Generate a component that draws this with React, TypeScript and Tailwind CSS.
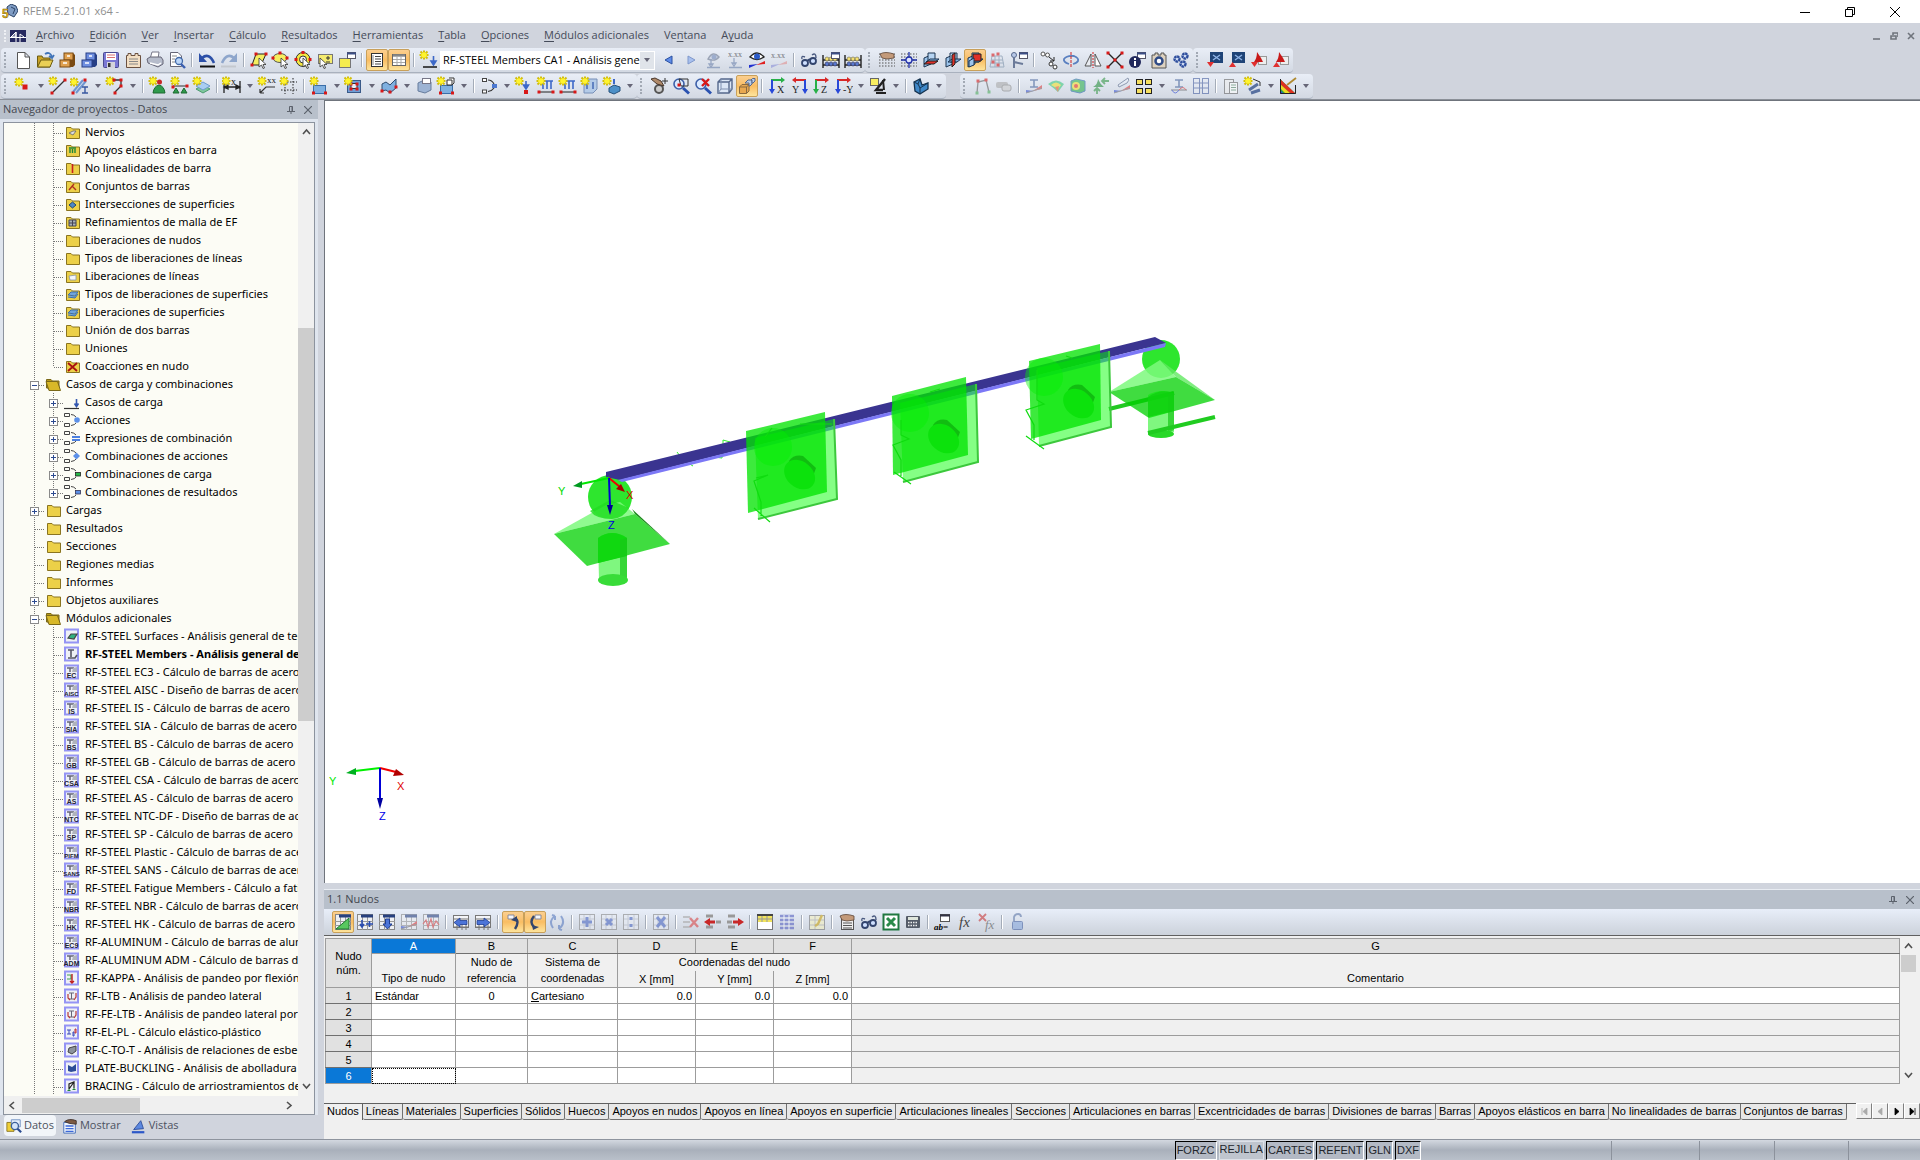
import type { ReactNode } from "react";

type PProps = { d: string; f?: string; s?: string; w?: number; o?: number };

function P({ d, f = "none", s = "none", w = 1, o = 1 }: PProps) {
  return <path d={d} fill={f} stroke={s} strokeWidth={w} opacity={o} />;
}

function Star({ x = 5, y = 5 }: { x?: number; y?: number }) {
  return (
    <g transform={`translate(${x} ${y})`}>
      <P d="M-4.500 0H4.500M0-4.500V4.500M-3.500-3.500L3.500 3.500M3.500-3.500L-3.500 3.500" s="#d2be10" w={2} />
      <circle r="2.800" fill="#fff42e" />
    </g>
  );
}

function Dots({ at, c = "#d81818" }: { at: number[][]; c?: string }) {
  return (
    <>
      {at.map(([x, y]) => (
        <rect key={`${x}-${y}`} x={x - 1.5} y={y - 1.5} width="3" height="3" fill={c} />
      ))}
    </>
  );
}

function Label({ x, y, t, c = "#222", size = 9 }: { x: number; y: number; t: string; c?: string; size?: number }) {
  return (
    <text x={x} y={y} fill={c} fontSize={size} fontFamily="Liberation Serif, serif">
      {t}
    </text>
  );
}

const cursor = <P d="M10 8V17L12.500 15L14 18.500L15.500 18L14 14.500H17Z" f="#fff" s="#333" w={0.8} />;
const miniWindow = (
  <>
    <rect x="10.500" y="2.500" width="8" height="6" fill="#fff" stroke="#556" />
    <P d="M10 3.500H19" s="#3c4f86" w={2} />
  </>
);
const gridDots = <path d="M2 4H18M2 7H18M2 10H18M2 13H18M2 16H18" stroke="#555" strokeWidth="1.200" strokeDasharray="1.500 1.500" />;
const sheet = (
  <>
    <rect x="2.500" y="2.500" width="15" height="15" fill="#eef0f4" stroke="#888" />
    <P d="M2 9.500H18M2 13.500H18M7.500 5V18M12.500 5V18" s="#999" />
    <P d="M6 4H18" s="#27407f" w={3} />
  </>
);
const lens = (
  <>
    <circle cx="8" cy="8" r="5" fill="#dbeaff" stroke="#3c5fa8" strokeWidth="1.600" />
    <P d="M12 12L18 17.500" s="#2a52b0" w={3} />
  </>
);
const surface = (
  <>
    <rect x="4.500" y="9.500" width="12" height="8" fill="#7fb0e0" stroke="#3a6ea8" />
    <Dots at={[[4.5, 17], [16.5, 17]]} />
  </>
);
const planes = (
  <>
    <P d="M3 8L10 5V14L3 17Z" f="#9cc4ec" s="#1c3450" />
    <P d="M7 3H14V12H7Z" f="#b6d4f2" s="#1c3450" />
    <P d="M5 12L9 9H18L14 12Z" f="#7fb0e0" s="#1c3450" />
  </>
);
const trace = (
  <>
    <rect x="3.500" y="2.500" width="4" height="3" fill="#fff" stroke="#444" />
    <rect x="3.500" y="14" width="4" height="3" fill="#fff" stroke="#444" />
    <P d="M9 4Q13 4 15 8M9 15.500Q13 15 15 12" s="#333" w={1.2} />
  </>
);
const beads = (
  <>
    <P d="M2 5V18M18 5V18M2 10H18M2 15H18" s="#222" w={1.4} />
    {[5, 9, 13].map((x) => (
      <g key={x}>
        <circle cx={x + 1} cy="9" r="2" fill="#f5e070" stroke="#665" strokeWidth=".6" />
        <circle cx={x + 1} cy="14" r="2" fill="#5878d0" stroke="#335" strokeWidth=".6" />
      </g>
    ))}
  </>
);
const glasses = (
  <>
    <P d="M3 9Q2 5 6 7M13 5Q17 2 17 8" s="#4a5a80" w={1.4} />
    <circle cx="6" cy="13" r="3" fill="#cfe0ff" stroke="#33456e" strokeWidth="1.800" />
    <circle cx="14" cy="11" r="3" fill="#cfe0ff" stroke="#33456e" strokeWidth="1.800" />
    <P d="M8 11L11 9" s="#33456e" w={2} />
  </>
);
const hand = <P d="M3 4Q8 1 17 4V8L10 9L5 8Z" f="#c39a7a" s="#5a4334" w={0.8} />;
const ibeam = <P d="M6 4H14M10 4V11M6 11H14" s="#46649c" w={1.6} />;
const diagram = (
  <>
    <P d="M2 17V14L10 15Z" f="#3a55d0" />
    <P d="M18 9V13L9 15Z" f="#e04040" />
    <P d="M2 17L18 12" s="#777" />
  </>
);

function axes(label: string, left: boolean, c1: string, c2: string) {
  const top = left ? "M17 4H5" : "M4 4H16";
  const head = left ? "M7 1L3 4L7 7Z" : "M14 1L18 4L14 7Z";
  const x = left ? 16 : 5;
  return (
    <>
      <P d={top} s={c1} w={2} />
      <P d={head} f={c1} />
      <P d={`M${x} 4V14`} s={c2} w={2} />
      <P d={`M${x - 3} 13H${x + 3}L${x} 18Z`} f={c2} />
      <Label x={left ? 3 : 10} y={17} t={label} size={10} />
    </>
  );
}

function cabinet(c: string, dark: string) {
  return (
    <>
      <P d="M8 3H16L18 5V15L16 17H8Z" f={dark} />
      <rect x="7" y="3" width="9" height="7" fill={c} stroke={dark} />
      <rect x="3" y="10" width="10" height="7" fill={c} stroke={dark} />
      <P d="M6 13H10M10 6H13" s="#fff" w={1.6} />
    </>
  );
}

function crossTable(sign: string) {
  return (
    <>
      <rect x="2.500" y="2.500" width="15" height="15" fill="#e7ebf3" stroke="#888" />
      <P d="M3 7H17M3 13H17M7 3V17M13 3V17" s="#b5bac6" />
      <P d={sign} s="#4a66c0" w={3} />
    </>
  );
}

const icons: Record<string, ReactNode> = {
  nuevo: <P d="M4.500 2.500H12L16.500 7V18.500H4.500ZM12 2.500V7H16.500" f="#fff" s="#555" />,
  abrir: (
    <>
      <P d="M2.500 17V6H7L8 8H15V17Z" f="#c9a227" s="#6b5b12" />
      <P d="M2.500 17L6 10H18L15 17Z" f="#e9cf55" s="#6b5b12" />
      <P d="M10 4Q15 1 17 7M14 6L17 8L19 5" s="#3f73b8" w={1.8} />
    </>
  ),
  archivador: cabinet("#dfa050", "#7a4a12"),
  archivadorAzul: cabinet("#6f8fe0", "#263f86"),
  guardar: (
    <>
      <rect x="2.500" y="2.500" width="15" height="15" rx="1" fill="#7a78d4" stroke="#4a4a90" />
      <rect x="5" y="3" width="10" height="7" fill="#fff" />
      <P d="M6 5H14M6 7.500H14" s="#d87070" />
      <rect x="6" y="12" width="8" height="6" fill="#d4d4dc" />
      <rect x="7" y="13" width="2.500" height="4" fill="#333" />
    </>
  ),
  informe: (
    <>
      <P d="M3.500 5.500H5V3.500H8V5.500H12V3.500H15V5.500H17.500V17.500H3.500Z" f="#f3dfc4" s="#6b5140" />
      <P d="M6 9H15M6 11.500H15M6 14H15" s="#888" />
    </>
  ),
  imprimir: (
    <>
      <P d="M5 9L7 2H14L13 9Z" f="#fff" s="#778" />
      <P d="M2 9L5 7H16L18 10V14L13 17L3 13Z" f="#b6bccb" s="#667" />
      <P d="M5 13L13 15L16 13" s="#fff" w={1.4} />
    </>
  ),
  vistaPrevia: (
    <>
      <P d="M3.500 2.500H11L14.500 6V16.500H3.500Z" f="#fff" s="#667" />
      <P d="M5 6H10M5 9H8M5 12H8" s="#888" />
      <circle cx="12" cy="11" r="3.500" fill="#bcd7fa" stroke="#4068a8" strokeWidth="1.300" />
      <P d="M14 14L18 18" s="#3a5fb0" w={2.4} />
    </>
  ),
  deshacer: (
    <>
      <P d="M5 8Q12 2 17 13" s="#2c50a8" w={2.6} />
      <P d="M2 3V12H10Z" f="#2c50a8" />
      <P d="M3 16.500H18" s="#111" w={2} />
    </>
  ),
  rehacer: (
    <>
      <P d="M15 8Q8 2 3 13" s="#8ea6cc" w={2.6} />
      <P d="M18 3V12H10Z" f="#8ea6cc" />
      <P d="M2 16.500H17" s="#c4c8ce" w={2} />
    </>
  ),
  selRombo: (
    <>
      <P d="M7 4H17L12 15H3Z" f="#f5ee60" s="#222" />
      {cursor}
      <Dots at={[[7, 4], [17, 4], [3, 15]]} />
    </>
  ),
  selElipse: (
    <>
      <ellipse cx="9" cy="8" rx="7" ry="4.500" fill="#f5ee60" stroke="#555" />
      {cursor}
      <Dots at={[[2, 8], [9, 3], [16, 8]]} />
    </>
  ),
  selAnillo: (
    <>
      <circle cx="10" cy="9.500" r="7" fill="#f5e840" stroke="#333" />
      <circle cx="10" cy="9.500" r="3.500" fill="#f2f4f8" stroke="#333" />
      {cursor}
      <Dots at={[[10, 2.5], [3, 9.5], [17, 9.5]]} />
    </>
  ),
  selMasMenos: (
    <>
      <rect x="3.500" y="4.500" width="14" height="9" fill="#f5ec70" stroke="#777" />
      <P d="M13 6V10M11 8H15M11 12H15" s="#333" />
      <P d="M5 8V17L7.500 15L9 18.500L10.500 18L9 14.500H12Z" f="#fff" s="#333" w={0.8} />
    </>
  ),
  selVentana: (
    <>
      <rect x="2.500" y="8.500" width="11" height="9" fill="#f5ec50" stroke="#777" />
      {miniWindow}
    </>
  ),
  panelLista: (
    <>
      <rect x="4.500" y="3.500" width="11" height="13" fill="#fff" stroke="#333" />
      <P d="M8 6.500H14M8 9H14M8 11.500H14M8 14H14" s="#444" />
      <P d="M6 5V15" s="#888" />
    </>
  ),
  panelTabla: (
    <>
      <rect x="3.500" y="4.500" width="13" height="11" fill="#fff" stroke="#666" />
      <P d="M4 5.500H16" s="#888" w={2.4} />
      <P d="M4 9.500H16M4 12.500H16M8 6V15M12 6V15" s="#aaa" />
    </>
  ),
  nuevaCarga: (
    <>
      <Star />
      <P d="M14.500 6V12M12 11H17L14.500 15Z" f="#3c68c8" s="#3c68c8" w={1.6} />
      <P d="M4 17H18" s="#222" w={1.6} />
    </>
  ),
  anterior: <P d="M13 6V14L6 10Z" f="#5f8ce8" s="#2a50a0" />,
  siguiente: <P d="M7 6V14L14 10Z" f="#a8c0ee" s="#7f98cc" />,
  verCarga: (
    <>
      <P d="M5 9Q10 0 16 7Q12 12 5 9Z" f="#c8d0e0" s="#6c7890" w={1.4} />
      <circle cx="11" cy="7" r="2.500" fill="#7088b8" />
      <P d="M8 9V15M6 14H10L8 17ZM4 17.500H17" s="#6c82ac" w={1.3} />
    </>
  ),
  verValores: (
    <>
      <Label x={3} y={7} t="x.xx" size={8} />
      <P d="M9 8V14M7 13H11L9 16ZM4 17.500H17" s="#6c82ac" w={1.3} />
    </>
  ),
  verResultados: (
    <>
      <P d="M3 7Q10-1 17 7Q10 12 3 7Z" f="#fff" s="#222" w={1.4} />
      <circle cx="10" cy="6.500" r="3" fill="#2a5ac8" />
      <P d="M2 18V15L11 14Z" f="#2030d0" />
      <P d="M18 11V14L9 15Z" f="#e02020" />
    </>
  ),
  valoresResultados: (
    <>
      <Label x={2} y={8} t="x.xx" size={8} />
      <P d="M2 18V15L11 14Z" f="#8a90d8" />
      <P d="M18 11V14L9 15Z" f="#e09090" />
    </>
  ),
  gafas: glasses,
  abacoVentana: (
    <>
      {beads}
      {miniWindow}
    </>
  ),
  abaco: beads,
  rejillaMano: (
    <>
      {gridDots}
      {hand}
    </>
  ),
  rejilla: (
    <>
      {gridDots}
      <circle cx="10" cy="10" r="3" fill="#dfe6ff" stroke="#2030a8" strokeWidth="1.300" />
      <P d="M10 2V7M10 13V18M2 10H7M13 10H18" s="#2030a8" w={1.3} />
    </>
  ),
  planoXY: (
    <>
      {planes}
      <P d="M3 14L7 11H17L13 14Z" f="#e03028" s="#222" />
    </>
  ),
  planoYZ: (
    <>
      {planes}
      <P d="M9 5L12 3V14L9 17Z" f="#e03028" s="#222" />
    </>
  ),
  planoXZ: (
    <>
      {planes}
      <P d="M8 4H16V11H8Z" f="#e03028" s="#222" />
      <P d="M4 11L9 8V15L4 17Z" f="#9cc4ec" s="#1c3450" />
    </>
  ),
  rejillaPlano: (
    <>
      <P d="M5 6L3 17H17L15 6ZM4 10H16M8 6V17M12 6V17M4 13H17" s="#7a90a8" />
      <Dots at={[[6, 5], [11, 4], [6, 12], [11, 15]]} />
    </>
  ),
  sca: (
    <>
      <P d="M5 18V8M5 12L14 14" s="#6b7a99" w={2} />
      <circle cx="5" cy="5" r="2.500" fill="#b8c8e8" stroke="#56688c" />
      {miniWindow}
    </>
  ),
  mover: (
    <>
      <circle cx="4" cy="4" r="2" fill="#fff" stroke="#555" />
      <circle cx="8.500" cy="5" r="2" fill="#fff" stroke="#555" />
      <circle cx="12" cy="14" r="2" fill="#fff" stroke="#333" />
      <circle cx="16" cy="17" r="2" fill="#fff" stroke="#333" />
      <P d="M10 7L15 11M15 7V11H11" s="#222" />
    </>
  ),
  girar: (
    <>
      <P d="M8 14Q2 12 3 9Q6 5 13 6Q18 8 17 11Q16 13 12 14" s="#5a80c0" w={1.8} />
      <path d="M10 2V18" stroke="#d02020" strokeDasharray="3 1" />
    </>
  ),
  simetria: (
    <>
      <P d="M8 4V16H2Z" s="#555" f="#e8ebf0" />
      <P d="M12 4V16H18Z" s="#555" f="#fff" />
      <path d="M10 2V18" stroke="#d02020" strokeDasharray="2 1" />
    </>
  ),
  nodoCruz: (
    <>
      <P d="M3 3L17 17M17 3L3 17" s="#222" w={1.4} />
      <Dots at={[[3, 3], [17, 3], [3, 17], [17, 17], [10, 10]]} />
    </>
  ),
  info: (
    <>
      {miniWindow}
      <circle cx="8" cy="12" r="6" fill="#20285c" />
      <P d="M8 8V10M8 11V16" s="#fff" w={2} />
    </>
  ),
  ajustes: (
    <>
      <P d="M3 5H6V3H9V5H12V3H15V5H17V18H3Z" f="#ddd2c0" s="#555" />
      <circle cx="10" cy="11" r="3.500" fill="#fff" stroke="#2e4a86" strokeWidth="2.500" />
    </>
  ),
  engranajes: (
    <g fill="#cfdcf4" stroke="#2c4c9c" strokeWidth="2.400" strokeDasharray="2.400 .5">
      <circle cx="6" cy="9" r="2.500" />
      <circle cx="14" cy="6" r="2.500" />
      <circle cx="12" cy="14" r="2.500" />
    </g>
  ),
  moduloAbajo: (
    <>
      <rect x="5" y="2" width="13" height="11" fill="#1f4478" />
      <P d="M8 5L15 10M15 5L8 10" s="#8fb4e8" w={1.4} />
      <P d="M2 12H9L5.500 17Z" f="#e03030" />
    </>
  ),
  moduloArriba: (
    <>
      <rect x="5" y="2" width="13" height="11" fill="#1f4478" />
      <P d="M8 5L15 10M15 5L8 10" s="#8fb4e8" w={1.4} />
      <P d="M2 17H9L5.500 12Z" f="#e03030" />
    </>
  ),
  pdfAbajo: (
    <>
      <rect x="9.500" y="6.500" width="8" height="8" fill="#eee" stroke="#999" />
      <P d="M5 12Q8 8 8 2L12 8L14 12Z" f="#c81818" />
      <P d="M2 12H9L5.500 17Z" f="#e03030" />
    </>
  ),
  pdfArriba: (
    <>
      <rect x="9.500" y="6.500" width="8" height="8" fill="#eee" stroke="#999" />
      <P d="M5 12Q8 8 8 2L12 8L14 12Z" f="#c81818" />
      <P d="M2 17H9L5.500 12Z" f="#e03030" />
    </>
  ),
  nudo: (
    <>
      <Star x={6} y={6} />
      <rect x="9.500" y="8.500" width="5" height="5" fill="#d81818" />
    </>
  ),
  linea: (
    <>
      <P d="M5 16L17 4" s="#333" w={1.3} />
      <Star />
      <Dots at={[[4, 17], [17, 4]]} />
    </>
  ),
  barra: (
    <>
      <P d="M3 16L13 4M6 17L16 5" s="#6f96d0" w={2} />
      <Star x={4} y={6} />
      <Dots at={[[3, 17], [15, 4]]} />
      <P d="M12 11H18M15 11V17M12 17H18" s="#3858a0" w={1.4} />
    </>
  ),
  polilinea: (
    <>
      <P d="M6 4H16V10L10 16" s="#333" w={1.3} />
      <Star />
      <Dots at={[[9, 4], [16, 4], [16, 10], [10, 17]]} />
    </>
  ),
  apoyoNudo: (
    <>
      <P d="M5 17Q6 10 11 9Q16 10 17 17Z" f="#2f9a4c" s="#1c6a30" />
      <Star />
      <circle cx="11.500" cy="6" r="2.500" fill="#c82828" />
    </>
  ),
  apoyoLinea: (
    <>
      <P d="M3 10H17" s="#333" />
      <P d="M3 17L6 12L9 17ZM11 17L14 12L17 17Z" f="#2f9a4c" s="#1c6a30" />
      <Star />
      <Dots at={[[3, 11], [17, 10]]} />
    </>
  ),
  apoyoSuperficie: (
    <>
      <P d="M4 13L11 9L18 13L11 17Z" f="#7fc89a" s="#4b9a70" />
      <P d="M4 10L11 6L18 10L11 14Z" f="#a9cdf2" s="#6d9ccc" />
      <Star />
    </>
  ),
  cota: (
    <>
      <P d="M2 5V17M18 5V17M2 11H18M2 11L6 9V13ZM18 11L14 9V13Z" s="#222" w={1.3} f="#222" />
      <Star x={4} y={5} />
      <Label x={9} y={9} t="x" size={10} />
    </>
  ),
  cotaCota: (
    <>
      <P d="M3 17L9 11H18M3 17V13M3 17H7" s="#333" w={1.2} />
      <Star />
      <Label x={10} y={7} t="xx" size={9} />
    </>
  ),
  lineaGuia: (
    <>
      <path d="M2 6H18M2 14H18M6 2V18M14 2V18" stroke="#222" strokeDasharray="1.500 1.500" />
      <Star />
    </>
  ),
  superficie: (
    <>
      {surface}
      <Star />
    </>
  ),
  abertura: (
    <>
      <rect x="3.500" y="4.500" width="13" height="12" fill="#6f9fd8" stroke="#3a5a88" />
      <rect x="7" y="7.500" width="6" height="5" fill="#e8eef8" stroke="#333" />
      <Dots at={[[7, 8], [13, 8], [7, 13], [13, 13]]} />
      <Star x={4} y={5} />
    </>
  ),
  superficieCurva: (
    <>
      <P d="M3 8L7 6L11 9L17 3V12L11 17L7 14L3 15Z" f="#7fb0e0" s="#2f4c70" />
      <Dots at={[[3, 15], [11, 16], [17, 11]]} />
    </>
  ),
  solidoVentana: (
    <>
      <P d="M4 7L10 4L17 6V14L11 17L4 15Z" f="#9db4d4" s="#667c9c" />
      <rect x="8.500" y="2.500" width="8" height="5" fill="#fff" stroke="#778" />
    </>
  ),
  solido: (
    <>
      {surface}
      <P d="M11 4H16V9H11ZM13 2H18V7L16 9" f="#fff" s="#333" />
      <Star />
    </>
  ),
  combinacion: (
    <>
      {trace}
      <rect x="13" y="8" width="5" height="4" fill="#4c78d0" />
    </>
  ),
  cargaNudo: (
    <>
      <Star />
      <P d="M12 5V10M9.500 9H14.500L12 13Z" f="#3c68c8" s="#3c68c8" w={1.6} />
      <rect x="10" y="14" width="4" height="4" fill="#d81818" />
    </>
  ),
  cargaLinea: (
    <>
      <P d="M5 5H17M7 5V13M11 5V13M15 5V13" s="#3c68c8" w={1.6} />
      <P d="M3 16H17" s="#222" />
      <Star />
      <Dots at={[[3, 16], [17, 16]]} />
    </>
  ),
  cargaSuperficie: (
    <>
      <P d="M4 5L8 3H17V13L13 17H4Z" f="#b4cbe8" s="#7890b8" />
      <P d="M7 6V13M13 6V13" s="#4c70b8" w={1.6} />
      <Star />
    </>
  ),
  cargaSolido: (
    <>
      <P d="M7 12L12 9L18 11V15L12 18L7 16Z" f="#4c90c8" s="#27527c" />
      <P d="M12 3V8" s="#3c68c8" w={2} />
      <Star />
    </>
  ),
  manoEngranaje: (
    <>
      <circle cx="10" cy="13" r="4" fill="#ccc" stroke="#555" strokeWidth="2" />
      <P d="M2 3L8 8L15 10L12 5L6 2Z" f="#b08a6a" s="#4a382c" />
      <P d="M16 2V8M13 5H19" s="#333" />
    </>
  ),
  zoomVentana: (
    <>
      {lens}
      <P d="M8 3H17V10H10Z" s="#333" />
      <Dots at={[[8, 9]]} />
    </>
  ),
  zoomQuitar: (
    <>
      {lens}
      <P d="M9 3L16 10M16 3L9 10" s="#d81818" w={2.4} />
    </>
  ),
  cubo: (
    <>
      <P d="M3 6L6 3H17V13L14 17H3ZM3 6H14V17M14 6L17 3" f="#dbe6f6" s="#56688c" w={1.4} />
      <P d="M6 3V13L3 17M6 13H17" s="#7f90b0" />
    </>
  ),
  cubos: (
    <>
      <P d="M2.500 11L5 8.500H12V15L9.500 17.500H2.500ZM2.500 11H9.500V17.500M9.500 11L12 8.500" f="#e8a850" s="#8a6a40" />
      <P d="M8 7L11 4H15V8L13 10H12V7Z" f="#b8cce8" s="#56688c" />
      <P d="M14 4L15.500 2.500H18V5L16 7H15V4Z" f="#b8cce8" s="#56688c" />
    </>
  ),
  vistaX: axes("X", false, "#28b048", "#2848d8"),
  vistaY: axes("Y", true, "#d82828", "#2848d8"),
  vistaZ: axes("Z", false, "#d82828", "#28b048"),
  vistaMenosY: axes("-Y", false, "#d82828", "#2848d8"),
  editar: (
    <>
      <rect x="2.500" y="2.500" width="8" height="7" fill="#f8ee60" stroke="#666" />
      <P d="M17 3L8 14H15" s="#222" w={2.4} />
      <P d="M15 4L16 14M8 17H18" s="#222" w={2} />
    </>
  ),
  volumen: (
    <>
      <P d="M3 6L9 3L11 9L17 7V13L9 18L4 15Z" f="#3f88c8" s="#15324e" w={1.3} />
      <P d="M3 6L7 8L9 3M7 8L9 12L17 7M9 12V18" s="#15324e" />
    </>
  ),
  deformada: (
    <>
      <P d="M5 17L6 6L14 4L17 16" s="#666" w={1.3} />
      <Dots c="#50b060" at={[[5, 17], [17, 16]]} />
      <Dots at={[[6, 5], [14, 4]]} />
    </>
  ),
  seccion: (
    <>
      <rect x="2" y="6" width="12" height="6" rx="2" fill="#aaa" />
      <rect x="8" y="9" width="9" height="6" rx="2" fill="#ccc" stroke="#888" />
    </>
  ),
  esfuerzos: (
    <>
      {ibeam}
      {diagram}
    </>
  ),
  isobandas: (
    <>
      <P d="M2 8Q10 1 18 8L12 16Q9 13 2 8Z" f="#40c880" />
      <P d="M5 9Q10 4 15 9L12 13Z" f="#f0e030" />
      <P d="M9 11L13 10L12 16Z" f="#f06030" />
    </>
  ),
  isoSolido: (
    <>
      <P d="M3 5L8 3L17 5V15L12 17L3 15Z" f="#30b050" s="#2868a8" />
      <circle cx="8" cy="10" r="4" fill="#f0e030" />
      <circle cx="8" cy="10" r="2" fill="#e83020" />
    </>
  ),
  reacciones: (
    <>
      <P d="M3 11Q8 8 8 3Q10 8 14 11Z" f="#2a9040" />
      <P d="M7 18V13M4 15L7 12L10 15M19 5H13M15 2L12 5L15 8" s="#389848" w={1.8} />
    </>
  ),
  tensiones: (
    <>
      <P d="M6 9L16 2Q18 4 15 7L7 11Z" f="#e8eef8" s="#586888" />
      {diagram}
    </>
  ),
  ventanas: (
    <g fill="#f6e060" stroke="#222">
      <rect x="2.500" y="3.500" width="6" height="5" />
      <rect x="11.500" y="3.500" width="6" height="5" />
      <rect x="2.500" y="12.500" width="6" height="5" />
      <rect x="11.500" y="12.500" width="6" height="5" />
    </g>
  ),
  momentos: (
    <>
      {ibeam}
      <P d="M2 14H18" s="#555" />
      <P d="M3 14Q6 20 10 14" s="#3048d0" />
      <P d="M10 14Q14 9 17 14" s="#d83030" />
    </>
  ),
  multiTabla: (
    <g fill="#e6ebf4" stroke="#4860a0">
      <rect x="2.500" y="2.500" width="6" height="15" />
      <rect x="11.500" y="2.500" width="6" height="15" />
      <path d="M2 7H18M2 12H18" />
    </g>
  ),
  listado: (
    <>
      <rect x="3.500" y="3.500" width="9" height="14" fill="#eee" stroke="#666" />
      <rect x="8.500" y="6.500" width="8" height="11" fill="#fff" stroke="#666" />
      <P d="M10 9H15M10 11.500H15M10 14H15" s="#586" />
    </>
  ),
  nuevoCorte: (
    <>
      <P d="M6 14L15 8M8 17L17 14" s="#5870a0" w={3} />
      <P d="M10 3L17 6V10" s="#333" />
      <Star />
    </>
  ),
  escala: (
    <>
      <P d="M2 3V18H18Z" f="#30b040" />
      <P d="M2 3L18 18H13L2 8Z" f="#e03020" />
      <P d="M2 8L13 18H8L2 12Z" f="#f0d820" />
      <P d="M2 14V18H6Z" f="#2848d8" />
      <P d="M2.500 3V17.500H17.500V9" s="#222" />
      <P d="M9 9L18 2" s="#b08a30" w={1.8} />
    </>
  ),
  tEditar: (
    <>
      {sheet}
      <P d="M3 17H16V6Z" f="#58c860" s="#1e7830" />
    </>
  ),
  tInsertar: (
    <>
      {sheet}
      <P d="M7 8V15M5 12L7 15L9 12M11 12H18M14.500 9V15" s="#2a4cb0" w={1.6} />
    </>
  ),
  tAbajo: (
    <>
      {sheet}
      <P d="M8.500 7H12.500V12H15L10.500 17L6 12H8.500Z" f="#4c74d8" s="#1e3c90" />
    </>
  ),
  tDiagrama: (
    <>
      {sheet}
      {diagram}
    </>
  ),
  tOndas: (
    <>
      {sheet}
      <P d="M2 12L5 8L7 15L10 7L12 15L15 9L18 13" s="#d84040" w={1.2} />
    </>
  ),
  tIzquierda: (
    <>
      <rect x="2.500" y="3.500" width="15" height="12" fill="#f4f5f8" stroke="#777" />
      <P d="M3 7H17M3 15H17M6 12V18M11 12V18M15 12V18" s="#777" />
      <P d="M16 8.500V12.500H9V15L3 10.500L9 6V8.500Z" f="#4c74d8" s="#1e3c90" w={0.8} />
    </>
  ),
  tDerecha: (
    <>
      <rect x="2.500" y="3.500" width="15" height="12" fill="#f4f5f8" stroke="#777" />
      <P d="M3 7H17M3 15H17M6 12V18M11 12V18M15 12V18" s="#777" />
      <P d="M4 8.500V12.500H11V15L17 10.500L11 6V8.500Z" f="#4c74d8" s="#1e3c90" w={0.8} />
    </>
  ),
  tSincA: (
    <>
      <P d="M5 3H11V7H5Z" f="#f4f6fa" s="#889" />
      <P d="M12 6Q17 9 12 17" s="#34466e" w={2.4} />
      <P d="M8 8L14 4V10Z" f="#34466e" />
    </>
  ),
  tSincB: (
    <>
      <P d="M10 3H16V7H10Z" f="#f4f6fa" s="#889" />
      <P d="M9 4Q4 10 9 15" s="#34466e" w={2.4} />
      <P d="M7 13L14 15L8 18Z" f="#34466e" />
    </>
  ),
  tRefrescar: <P d="M6 16Q1 9 8 4M14 4Q19 11 12 17M8 4L5 3M12 17L15 18M8 4V8M12 17V13" s="#5a7cc0" w={2} />,
  tMas: crossTable("M10 5V15M5 10H15"),
  tEquis: crossTable("M7 7L13 13M13 7L7 13"),
  tDos: crossTable("M10 5V8M10 12V15"),
  tBorrar: crossTable("M6 5L14 15M14 5L6 15"),
  tFilaBorrar: (
    <>
      <P d="M2 5H9M2 10H9M2 15H9" s="#aaa" w={2} />
      <P d="M9 6L17 15M17 6L9 15" s="#d84848" w={2.4} />
    </>
  ),
  tFilaIzq: (
    <>
      <P d="M3 4H10M3 15H10M13 10H18" s="#999" w={3} />
      <P d="M12 8.500V11.500H7V14L1 10L7 6V8.500Z" f="#c82828" />
    </>
  ),
  tFilaDer: (
    <>
      <P d="M3 4H10M3 15H10M2 10H7" s="#999" w={3} />
      <P d="M8 8.500V11.500H13V14L19 10L13 6V8.500Z" f="#c82828" />
    </>
  ),
  tAmarilla: (
    <>
      <rect x="2.500" y="3.500" width="15" height="14" fill="#fff" stroke="#777" />
      <rect x="3" y="4" width="14" height="6" fill="#f2e45c" />
      <P d="M2 3H18" s="#444" w={2} />
      <P d="M3 7H17M7 4V10M12 4V10" s="#999" />
    </>
  ),
  tAzul: (
    <>
      <P d="M3 4H17M3 8H17M3 12H17M3 16H17" s="#5560c0" w={2.6} />
      <P d="M7 3V18M12 3V18" s="#fff" />
    </>
  ),
  tLapiz: (
    <>
      <rect x="2.500" y="3.500" width="15" height="14" fill="#f3f0c0" stroke="#777" />
      <P d="M3 8H17M3 13H17M8 4V17" s="#aaa" />
      <P d="M8 14L11 12L15 3" s="#c8a010" w={2.4} />
    </>
  ),
  tPropiedades: (
    <>
      <rect x="4.500" y="5.500" width="12" height="12" fill="#eee" stroke="#555" />
      <P d="M6 11H15M6 13.500H15M6 16H15" s="#555" />
      {hand}
    </>
  ),
  excel: (
    <>
      <rect x="2.500" y="2.500" width="15" height="15" fill="#fff" stroke="#207840" strokeWidth="2" />
      <P d="M6 6L14 14M14 6L6 14" s="#2a8a4a" w={3} />
    </>
  ),
  calculadora: (
    <>
      <rect x="3" y="4" width="14" height="12" rx="1" fill="#555c68" />
      <rect x="5" y="5" width="10" height="3" fill="#dfe6dc" />
      <path d="M5 10.500H15M5 13.500H15" stroke="#eee" strokeWidth="1.500" strokeDasharray="1.500 1" />
    </>
  ),
  parametros: (
    <>
      <rect x="7.500" y="2.500" width="9" height="7" fill="#fff" stroke="#555" />
      <P d="M7 3.500H17" s="#334" w={2} />
      <text x="1" y="18" fontSize="9" fontStyle="italic" fontWeight="bold" fontFamily="Liberation Serif, serif">
        ab=
      </text>
    </>
  ),
  fx: (
    <text x="4" y="15" fontSize="15" fill="#444" fontStyle="italic" fontFamily="Liberation Serif, serif">
      fx
    </text>
  ),
  fxBorrar: (
    <>
      <text x="8" y="17" fontSize="13" fill="#555" fontStyle="italic" fontFamily="Liberation Serif, serif">
        fx
      </text>
      <P d="M2 2L9 9M9 2L2 9" s="#c83838" w={1.8} />
    </>
  ),
  candado: (
    <>
      <P d="M7 9V5Q8 2 11 2Q14 2 14 5" s="#5f78a8" w={1.8} />
      <rect x="5.500" y="9.500" width="10" height="8" rx="1" fill="#88a8dc" stroke="#4460a0" />
    </>
  ),
};

// "|" is a separator, ":*" a pressed button, ":v" adds a drop-down arrow, ":~" is disabled
function Tools({ items }: { items: string }) {
  return (
    <>
      {items.split(" ").map((item, i) => {
        if (item === "|") {
          return <span key={i} className="mx-[3px] h-[14px] w-[2px] border-l border-[#a4acb8] bg-white" />;
        }
        const [name, flag] = item.split(":");
        if (flag === "v") {
          return (
            <span key={i} className="flex h-[22px] w-[35px] items-center">
              <button type="button" aria-label={name} className="flex h-[22px] w-[22px] items-center justify-center">
                <svg viewBox="0 0 20 20" className="h-5 w-5">{icons[name]}</svg>
              </button>
              <button type="button" aria-label={`${name} opciones`} className="flex h-[22px] w-[13px] items-center justify-center">
                <svg viewBox="0 0 6 4" className="h-1 w-[6px]">
                  <path d="M0 0H6L3 4Z" fill="#667" />
                </svg>
              </button>
            </span>
          );
        }
        return (
          <button
            key={i}
            type="button"
            aria-label={name}
            aria-pressed={flag === "*"}
            className={
              flag === "*"
                ? "flex h-[22px] w-[22px] items-center justify-center rounded-xs border border-[#c9a05a] bg-linear-to-b from-[#fbcf90] via-[#f9bd62] to-[#fde49c]"
                : "flex h-[22px] w-[22px] items-center justify-center"
            }
          >
            <svg viewBox="0 0 20 20" className={flag === "~" ? "h-5 w-5 opacity-60" : "h-5 w-5 shrink-0"}>
              {icons[name]}
            </svg>
          </button>
        );
      })}
    </>
  );
}

function ToolGroup({ children }: { children: ReactNode }) {
  return (
    <div className="flex h-[25px] items-center rounded-sm border-b border-[#a9b1be] bg-linear-to-b from-[#e9eef7] to-[#d3d9e3] pr-px">
      <span className="mr-[5px] ml-[3px] h-4 w-[3px] border-l-2 border-dotted border-[#a2a9b4]" />
      {children}
    </div>
  );
}

const menus = [
  ["", "A", "rchivo"],
  ["", "E", "dición"],
  ["", "V", "er"],
  ["", "I", "nsertar"],
  ["", "C", "álculo"],
  ["", "R", "esultados"],
  ["", "H", "erramientas"],
  ["", "T", "abla"],
  ["", "O", "pciones"],
  ["", "M", "ódulos adicionales"],
  ["Ve", "n", "tana"],
  ["A", "y", "uda"],
];

function TitleBar() {
  return (
    <header className="flex h-[23px] items-center justify-between bg-white pr-5 pl-[2px]">
      <div className="flex items-center gap-[5px]">
        <svg viewBox="0 0 16 16" className="h-4 w-4">
          <path d="M5 3L9 0L14 2L16 7L12 13L6 10Z" fill="#7f9cc4" stroke="#2c4468" />
          <path d="M9 3L13 5L11 10" fill="none" stroke="#2c4468" />
          <text x="0" y="14" fontSize="12" fontWeight="bold" fill="#e8b818" stroke="#5a4608" strokeWidth=".4" fontFamily="Liberation Sans, sans-serif">
            5
          </text>
        </svg>
        <h1 className="text-[11px] text-[#8f8f8f]">RFEM 5.21.01 x64 -</h1>
      </div>
      <div className="flex gap-[35px]">
        <button type="button" aria-label="Minimizar">
          <svg viewBox="0 0 10 10" className="h-[10px] w-[10px]" stroke="#000" fill="none">
            <path d="M0 5.500H10" />
          </svg>
        </button>
        <button type="button" aria-label="Restaurar">
          <svg viewBox="0 0 10 10" className="h-[10px] w-[10px]" stroke="#000" fill="none">
            <path d="M.5 2.500H7.500V9.500H.5ZM2.500 2.500V.5H9.500V7.500H7.500" />
          </svg>
        </button>
        <button type="button" aria-label="Cerrar">
          <svg viewBox="0 0 10 10" className="h-[10px] w-[10px]" stroke="#000" fill="none">
            <path d="M0 0L10 10M10 0L0 10" />
          </svg>
        </button>
      </div>
    </header>
  );
}

function MenuBar() {
  return (
    <nav className="flex h-[25px] items-center justify-between bg-[#d0d4dd] pr-[5px] pl-1">
      <div className="flex items-center">
        <span className="mr-1 h-3 w-[2px] border-l-2 border-dotted border-[#eef0f4]" />
        <svg viewBox="0 0 16 12" className="mr-[10px] h-3 w-4" stroke="#fff" fill="none">
          <path d="M0 0H16V12H0Z" fill="#26295f" stroke="none" />
          <path d="M0 7.500H16" />
          <path d="M6 2V12M6 2L1 7H6ZM10 4V12M10 4L14 7" fill="#fff" fillOpacity=".4" />
        </svg>
        <div className="flex gap-[15px] text-[11px] text-[#454b59]">
          {menus.map(([pre, key, post]) => (
            <button type="button" key={post}>
              {pre}
              <u className="underline-offset-2">{key}</u>
              {post}
            </button>
          ))}
        </div>
      </div>
      <div className="flex items-center gap-[9px] text-[#6f747c]">
        {[
          ["Minimizar documento", "M0 7H7"],
          ["Restaurar documento", "M1 4H6V7H1ZM3 3V1H8V5"],
          ["Cerrar documento", "M1 1L7 7M7 1L1 7"],
        ].map(([label, d]) => (
          <button type="button" key={label} aria-label={label}>
            <svg viewBox="0 0 8 8" className="h-2 w-2" stroke="currentColor" strokeWidth="1.600" fill="none">
              <path d={d} />
            </svg>
          </button>
        ))}
      </div>
    </nav>
  );
}

function Toolbars() {
  return (
    <div className="flex flex-col gap-px border-b border-[#8b9098] bg-[#d0d4dd] pl-[1px]">
      <div className="flex">
        <ToolGroup>
          <Tools items="nuevo abrir archivador archivadorAzul guardar informe imprimir vistaPrevia | deshacer rehacer | selRombo selElipse selAnillo selMasMenos selVentana | panelLista:* panelTabla:* | nuevaCarga" />
          <label htmlFor="caso" className="sr-only">
            Caso de carga
          </label>
          <div className="mr-[3px] flex h-[19px] w-[215px] items-center bg-white pr-px">
            <select id="caso" className="h-[19px] w-[200px] appearance-none pl-[3px] text-[11px] text-black">
              <option>RF-STEEL Members CA1 - Análisis gene</option>
            </select>
            <span className="flex h-[17px] w-[15px] items-center justify-center bg-[#e0e4ea]">
              <svg viewBox="0 0 6 4" className="h-1 w-[6px]">
                <path d="M0 0H6L3 4Z" fill="#667" />
              </svg>
            </span>
          </div>
          <Tools items="anterior siguiente verCarga:~ verValores:~ verResultados valoresResultados:~ | gafas abacoVentana abaco" />
        </ToolGroup>
        <ToolGroup>
          <Tools items="rejillaMano rejilla planoXY planoYZ planoXZ:* rejillaPlano:~ sca | mover girar simetria nodoCruz info ajustes engranajes" />
        </ToolGroup>
        <ToolGroup>
          <Tools items="moduloAbajo moduloArriba pdfAbajo pdfArriba" />
        </ToolGroup>
      </div>
      <div className="flex">
        <ToolGroup>
          <Tools items="nudo:v linea barra:v polilinea:v | apoyoNudo apoyoLinea apoyoSuperficie | cota:v cotaCota lineaGuia | superficie:v abertura:v superficieCurva:v solidoVentana solido:v | combinacion:v cargaNudo cargaLinea cargaLinea cargaSuperficie cargaSolido:v" />
        </ToolGroup>
        <ToolGroup>
          <Tools items="manoEngranaje zoomVentana zoomQuitar cubo cubos:* | vistaX vistaY vistaZ vistaMenosY:v editar:v | volumen:v" />
        </ToolGroup>
        <span className="w-[14px]" />
        <ToolGroup>
          <Tools items="deformada:~ seccion:~ | esfuerzos:~ isobandas:~ isoSolido:~ reacciones:~ tensiones:~ ventanas:v momentos:~ multiTabla:~ | listado:~ nuevoCorte:v escala:v" />
        </ToolGroup>
      </div>
    </div>
  );
}

function PanelTitle({ title }: { title: string }) {
  return (
    <div className="flex h-[19px] items-center justify-between bg-[#b8c0cb] pr-[6px] pl-[3px]">
      <h2 className="text-[11px] text-[#43474f]">{title}</h2>
      <div className="flex gap-[9px]">
        <button type="button" aria-label={`Fijar ${title}`}>
          <svg viewBox="0 0 8 8" className="h-2 w-2" stroke="#5c626c" fill="none">
            <path d="M2.500 5V.5H5.500V5M5 .5V5M0 5.500H8M4 5V8" />
          </svg>
        </button>
        <button type="button" aria-label={`Cerrar ${title}`}>
          <svg viewBox="0 0 8 8" className="h-2 w-2" stroke="#5c626c" strokeWidth="1.200" fill="none">
            <path d="M0 0L8 8M8 0L0 8" />
          </svg>
        </button>
      </div>
    </div>
  );
}

type Node = { text: string; level: 1 | 2; icon: string; box?: "+" | "-"; last?: boolean; bold?: boolean };

const sub = (text: string, icon = "folder", extra: Partial<Node> = {}): Node => ({ text, level: 2, icon, ...extra });
const top = (text: string, extra: Partial<Node> = {}): Node => ({ text, level: 1, icon: "folder", ...extra });

const tree: Node[] = [
  sub("Nervios", "f-rib"),
  sub("Apoyos elásticos en barra", "f-spring"),
  sub("No linealidades de barra", "f-nonlinear"),
  sub("Conjuntos de barras", "f-set"),
  sub("Intersecciones de superficies", "f-cross"),
  sub("Refinamientos de malla de EF", "f-mesh"),
  sub("Liberaciones de nudos"),
  sub("Tipos de liberaciones de líneas"),
  sub("Liberaciones de líneas", "f-line"),
  sub("Tipos de liberaciones de superficies", "f-surface"),
  sub("Liberaciones de superficies", "f-surface"),
  sub("Unión de dos barras"),
  sub("Uniones"),
  sub("Coacciones en nudo", "f-node", { last: true }),
  top("Casos de carga y combinaciones", { box: "-", icon: "open" }),
  sub("Casos de carga", "load", { box: "+" }),
  sub("Acciones", "c-circle", { box: "+" }),
  sub("Expresiones de combinación", "c-equal", { box: "+" }),
  sub("Combinaciones de acciones", "c-diamond", { box: "+" }),
  sub("Combinaciones de carga", "c-green", { box: "+" }),
  sub("Combinaciones de resultados", "c-blue", { box: "+", last: true }),
  top("Cargas", { box: "+" }),
  top("Resultados"),
  top("Secciones"),
  top("Regiones medias"),
  top("Informes"),
  top("Objetos auxiliares", { box: "+" }),
  top("Módulos adicionales", { box: "-", icon: "open" }),
  sub("RF-STEEL Surfaces - Análisis general de tensiones", "m-surface"),
  sub("RF-STEEL Members - Análisis general de tensiones", "m-beam", { bold: true }),
  sub("RF-STEEL EC3 - Cálculo de barras de acero", "m:EC"),
  sub("RF-STEEL AISC - Diseño de barras de acero", "m:AISC"),
  sub("RF-STEEL IS - Cálculo de barras de acero", "m:IS"),
  sub("RF-STEEL SIA - Cálculo de barras de acero", "m:SIA"),
  sub("RF-STEEL BS - Cálculo de barras de acero", "m:BS"),
  sub("RF-STEEL GB - Cálculo de barras de acero", "m:GB"),
  sub("RF-STEEL CSA - Cálculo de barras de acero", "m:CSA"),
  sub("RF-STEEL AS - Cálculo de barras de acero", "m:AS"),
  sub("RF-STEEL NTC-DF - Diseño de barras de acero", "m:NTC"),
  sub("RF-STEEL SP - Cálculo de barras de acero", "m:SP"),
  sub("RF-STEEL Plastic - Cálculo de barras de acero", "m:PIFM"),
  sub("RF-STEEL SANS - Cálculo de barras de acero", "m:SANS"),
  sub("RF-STEEL Fatigue Members - Cálculo a fatiga", "m:FD"),
  sub("RF-STEEL NBR - Cálculo de barras de acero", "m:NBR"),
  sub("RF-STEEL HK - Cálculo de barras de acero", "m:HK"),
  sub("RF-ALUMINUM - Cálculo de barras de aluminio", "m:EC9"),
  sub("RF-ALUMINUM ADM - Cálculo de barras de aluminio", "m:ADM"),
  sub("RF-KAPPA - Análisis de pandeo por flexión", "m-kappa"),
  sub("RF-LTB - Análisis de pandeo lateral", "m-ltb"),
  sub("RF-FE-LTB - Análisis de pandeo lateral por EF", "m-ltb"),
  sub("RF-EL-PL - Cálculo elástico-plástico", "m-elpl"),
  sub("RF-C-TO-T - Análisis de relaciones de esbeltez", "m-channel"),
  sub("PLATE-BUCKLING - Análisis de abolladura", "m-plate"),
  sub("BRACING - Cálculo de arriostramientos de cubierta", "m-bracing"),
];

const treeMarks: Record<string, ReactNode> = {
  "f-rib": <P d="M5 9L9 7L12 7L9 11Z" f="#ddd" s="#666" w={0.8} />,
  "f-spring": <P d="M5 6H12M6 7V11M8.500 7V11M11 7V11" s="#208838" w={1.4} />,
  "f-nonlinear": <P d="M8.500 4V13" s="#c82020" w={1.6} />,
  "f-set": <P d="M5 12L10 6M8 8L12 12" s="#b03020" w={1.4} />,
  "f-cross": <P d="M5 9L8.500 6L12 9L8.500 12Z" f="#4c88c8" s="#25466c" />,
  "f-mesh": <P d="M5 6H12V12H5ZM5 9H12M8.500 6V12" f="#a8b0b8" s="#445" />,
  "f-line": <P d="M5 8L12 7V12H6Z" f="#f4f6fa" s="#8895a8" w={0.8} />,
  "f-surface": <P d="M4 9L7 6H14L11 10ZM4 11L11 12L14 8" f="#6fa4dc" s="#3d6ea8" />,
  "f-node": <P d="M4 5L13 13M13 5L4 13" s="#a81010" w={1.8} />,
  "c-circle": <circle cx="13" cy="8" r="2.800" fill="#5c90e8" />,
  "c-equal": <P d="M8 7H16M8 10H16" s="#4c80e0" w={2.2} />,
  "c-diamond": <P d="M12.500 4.500L16 8L12.500 11.500L9 8Z" f="#5c90e8" />,
  "c-green": <rect x="11.500" y="6.500" width="5" height="3.500" fill="#28b848" stroke="#222" strokeWidth=".8" />,
  "c-blue": <rect x="11.500" y="6.500" width="5" height="3.500" fill="#5c90e8" stroke="#335" strokeWidth=".8" />,
  "m-surface": <P d="M4 10L7 6H13L10 11Z" f="#30b080" s="#444" w={1.2} />,
  "m-beam": <P d="M4 4H10M7 4V11M4 12H11L13 9" s="#556" w={1.6} />,
  "m-kappa": (
    <>
      <P d="M3 5H7V9H3" s="#40a050" w={1.2} />
      <P d="M8 4V13M6 11L8 13L10 11" s="#c02020" w={1.4} />
    </>
  ),
  "m-ltb": (
    <>
      <P d="M5 5H10M7.500 5V11M5 11H10" s="#667" />
      <P d="M4 6V10L6 12M12 5V9L10 12" s="#b83838" w={1.2} />
    </>
  ),
  "m-elpl": (
    <>
      <P d="M3 6H7M5 6V10M3 10H7" s="#3848b8" />
      <P d="M9 12V8H10V12Z" s="#3848b8" />
      <P d="M11 9V5H12V9Z" s="#c03030" />
    </>
  ),
  "m-channel": <P d="M5 6L12 4V9L8 12L4 10Z" f="#8c939c" s="#444" />,
  "m-plate": <P d="M4 5L8 7L12 4V11L7 12L4 11Z" f="#2c4c98" />,
  "m-bracing": (
    <>
      <P d="M5 11V6L10 4V10M5 11L10 4" s="#222" w={1.2} />
      <P d="M3 13L5 11L7 13ZM8 12L10 10L12 12Z" f="#208838" />
    </>
  ),
};

function TreeIcon({ icon }: { icon: string }) {
  const code = icon.startsWith("m:") ? icon.slice(2) : "";
  return (
    <svg viewBox="0 0 16 16" className="mr-[5px] ml-px h-4 w-4 shrink-0 overflow-visible">
      {(icon === "folder" || icon.startsWith("f-")) && (
        <path d="M2.500 14.500V3.500H7L8.500 5H15.500V14.500Z" fill="#ecd048" stroke="#8a7420" />
      )}
      {icon === "open" && (
        <>
          <path d="M1.500 12V3.500H6L7.500 5H14V13Z" fill="#b89a1c" stroke="#7a6818" />
          <path d="M1 5.500H12.500L15.500 14.500H4Z" fill="#d8b828" stroke="#7a6818" />
        </>
      )}
      {icon === "load" && (
        <>
          <path d="M0 14.500H15" stroke="#333" strokeWidth="1.200" />
          <path d="M12.500 5V12M10.500 9.500L12.500 12.500L14.500 9.500" stroke="#3458b0" strokeWidth="1.600" fill="none" />
        </>
      )}
      {icon.startsWith("c-") && (
        <path d="M.5 1.500H5.500V4.500H.5ZM.5 11.500H5.500V14.500H.5ZM7 2.500Q10 2.500 12 5M7 13.500Q11 13 12 11" stroke="#444" fill="none" />
      )}
      {icon.startsWith("m") && (
        <rect x="1" y="1.500" width="13" height="13" fill="#eef0f6" stroke="#9494f4" strokeWidth="2" />
      )}
      {code && (
        <>
          <path d="M3 4H10M6 4V8" stroke="#667" strokeWidth="1.500" />
          <path d="M9 4L13 3V8H8Z" fill="#b0b4bc" />
          <text x="7.500" y="14" fontSize={code.length > 3 ? 6 : 7} fontWeight="bold" textAnchor="middle" fill="#223" fontFamily="Liberation Sans, sans-serif">
            {code}
          </text>
        </>
      )}
      {treeMarks[icon]}
    </svg>
  );
}

function Guide({ end, branch, box }: { end?: boolean; branch?: boolean; box?: string }) {
  const drawing = (
    <svg viewBox="0 0 19 18" className="block h-[18px] w-[19px]" fill="none">
      <path d={`M9.500 0V${end ? 10 : 18}${branch ? "M10 10.500H19" : ""}`} stroke="#777" strokeDasharray="1 1" />
      {box && (
        <>
          <rect x="5.500" y="6.500" width="8" height="8" fill="#fff" stroke="#8a8a8a" />
          <path d={box === "+" ? "M7 10.500H12M9.500 8V13" : "M7 10.500H12"} stroke="#2c4a90" />
        </>
      )}
    </svg>
  );
  return box ? (
    <button type="button" aria-label={box === "+" ? "Expandir" : "Contraer"} className="shrink-0">
      {drawing}
    </button>
  ) : (
    <span className="shrink-0">{drawing}</span>
  );
}

function Navigator() {
  return (
    <aside className="flex w-[318px] shrink-0 flex-col bg-[#dfe5ee]">
      <PanelTitle title="Navegador de proyectos - Datos" />
      <div className="mx-[3px] mt-[3px] flex flex-1 flex-col border border-[#8c939e] bg-[#f0f0f0]">
        <div className="flex flex-1">
          <ul className="min-w-0 flex-1 overflow-hidden bg-[#fcfcf5] pl-[21px] font-['Noto_Sans','Open_Sans',sans-serif] text-[11px] text-black">
            {tree.map((node) => (
              <li key={node.text} className="flex h-[18px] items-center overflow-hidden whitespace-nowrap">
                <Guide branch={node.level === 1} box={node.level === 1 ? node.box : undefined} />
                {node.level === 2 && <Guide branch end={node.last} box={node.box} />}
                <TreeIcon icon={node.icon} />
                <span className={node.bold ? "font-bold" : ""}>{node.text}</span>
              </li>
            ))}
          </ul>
          <div className="flex w-4 flex-col items-center bg-[#f0f0f0] py-[5px]">
            <Chevron d="M1 6L4.500 2L8 6" />
            <div className="mt-[191px] h-[393px] w-4 bg-[#cdcdcd]" />
            <span className="flex-1" />
            <Chevron d="M1 2L4.500 6L8 2" />
          </div>
        </div>
        <div className="flex h-[18px] items-center bg-[#f0f0f0] pr-5 pl-1">
          <Chevron d="M6 1L2 4.500L6 8" />
          <div className="ml-[5px] h-[15px] w-[118px] bg-[#cdcdcd]" />
          <span className="flex-1" />
          <Chevron d="M2 1L6 4.500L2 8" />
        </div>
      </div>
      <div className="flex h-[24px] items-start gap-[6px] bg-[#d0d4dd] pl-1 text-[11px] text-[#4c5260]">
        <button type="button" className="flex h-[21px] items-center gap-[2px] rounded-sm bg-[#f2f5f9] px-[2px]">
          <svg viewBox="0 0 18 18" className="h-4 w-4">
            <path d="M1 5H9V15H1Z" fill="#f0d038" stroke="#8a7420" />
            <path d="M6 2H16V10H6Z" fill="#e8f0fc" stroke="#6a8cc0" />
            <circle cx="10" cy="9" r="4" fill="#d4e4fa" stroke="#3c5f98" strokeWidth="1.500" />
            <path d="M13 12L17 16" stroke="#2a4a90" strokeWidth="2.500" />
          </svg>
          Datos
        </button>
        <button type="button" className="flex h-[21px] items-center gap-[2px]">
          <svg viewBox="0 0 18 18" className="h-4 w-4">
            <path d="M2 5H15V17H2Z" fill="#eef3fb" stroke="#3c68b8" />
            <path d="M4 9H13M4 12H13M4 15H13" stroke="#3c68d8" strokeWidth="1.500" />
            <path d="M3 4Q8 0 16 3V7L8 6Z" fill="#7c5a44" stroke="#40302a" />
          </svg>
          Mostrar
        </button>
        <button type="button" className="flex h-[21px] items-center gap-[2px] pl-1">
          <svg viewBox="0 0 18 18" className="h-4 w-4">
            <path d="M3 13L11 3L14 12Z" fill="#5c88e0" stroke="#2c4c98" />
            <path d="M1 16H15" stroke="#2c58c8" strokeWidth="2.500" />
          </svg>
          Vistas
        </button>
      </div>
    </aside>
  );
}

function Chevron({ d }: { d: string }) {
  return (
    <svg viewBox="0 0 9 9" className="h-[9px] w-[9px] shrink-0" fill="none" stroke="#505050" strokeWidth="1.600">
      <path d={d} />
    </svg>
  );
}

const plates = [
  {
    back: "746,431 825,412 827,492 748,513",
    front: "755,438 834,419 837,499 758,519",
    edge: "M834 419L837 499L758 519",
    ball: [773, 447],
    rod: [800, 471],
    wire: "M756 478L768 475L754 481L761 502V516M754 508L770 522M765 437L772 428M800 424L832 424",
  },
  {
    back: "892,396 966,377 968,455 893,475",
    front: "900,403 976,384 978,462 903,482",
    edge: "M976 384L978 462L903 482",
    ball: [910, 413],
    rod: [944, 435],
    wire: "M901 420V435L909 439L893 445L901 460V476M894 472L911 484M930 392L940 389",
  },
  {
    back: "1029,361 1100,344 1101,420 1031,439",
    front: "1037,368 1109,351 1111,427 1039,446",
    edge: "M1109 351L1111 427L1039 446",
    ball: [1044, 377],
    rod: [1079, 400],
    wire: "M1037 370V400L1044 404L1026 410L1034 425V440M1026 436L1044 449M1066 356L1072 358",
  },
];

function Viewport() {
  return (
    <section aria-label="Modelo" className="flex min-h-[400px] flex-1 border-t border-l border-[#6f747c] bg-white">
      <svg className="h-0 min-h-full w-full" fontFamily="Liberation Sans, sans-serif" fontSize="11">
        <g transform="translate(-325 -101)">
          <path d="M677 452L680 456M688 463L693 466M714 457L722 458V454M723 444V440L730 442" fill="none" stroke="#30f030" />
          <ellipse cx="610" cy="497" rx="22" ry="22" fill="#2ee62e" />
          <ellipse cx="1161" cy="359" rx="19" ry="19" fill="#2ee62e" />
          <path d="M606 472L1155 337L1166 343L620 480L606 477Z" fill="#3a3490" />
          <path d="M618 480L1166 343L1165 347L622 482Z" fill="#7c78f6" />

          {/* left support */}
          <path d="M554 534L606 505L620 502L635 514Z" fill="#7cf97c" fillOpacity=".85" />
          <path d="M554 534L635 514L670 544L587 566Z" fill="#00d000" fillOpacity=".75" />
          <path d="M632 509L670 544L635 514Z" fill="#1a8a1a" />
          <path d="M590 511Q596 519 612 519Q624 518 629 508L610 500Z" fill="#20dc20" fillOpacity=".8" />
          <path d="M598 538Q612 528 627 538V580H599Z" fill="#00f000" fillOpacity=".5" />
          <path d="M598 538Q612 528 627 538V556L598 563Z" fill="#10d810" />
          <path d="M620 540L627 538V578L620 576Z" fill="#18c818" fillOpacity=".7" />
          <ellipse cx="613" cy="580" rx="15" ry="6" fill="#38dc38" />

          {/* right support */}
          <path d="M1109 392L1160 360L1176 377Z" fill="#7cf97c" fillOpacity=".85" />
          <path d="M1160 360L1176 377L1215 400Z" fill="#60e860" fillOpacity=".8" />
          <path d="M1109 409L1174 393" stroke="#22c822" strokeWidth="4" />
          <path d="M1109 392L1176 377L1215 400L1149 418Z" fill="#00d000" fillOpacity=".75" />
          <path d="M1148 395Q1160 388 1174 393V432Q1160 440 1148 434Z" fill="#00f000" fillOpacity=".5" />
          <path d="M1168 394L1174 393V430L1168 433Z" fill="#18c818" fillOpacity=".7" />
          <path d="M1148 397Q1160 388 1174 393V411L1148 417Z" fill="#10d010" fillOpacity=".8" />
          <ellipse cx="1161" cy="434" rx="13" ry="4" fill="#28d828" />
          <path d="M1148 433L1215 417" stroke="#20cc20" strokeWidth="4" />

          {plates.map((p) => (
            <g key={p.back}>
              <ellipse cx={p.ball[0]} cy={p.ball[1]} rx="19" ry="19" fill="#00f000" fillOpacity=".35" />
              <polygon points={p.front} fill="#00ff00" fillOpacity=".48" />
              <polygon points={p.back} fill="#00e400" fillOpacity=".76" />
              <path d={p.edge} fill="none" stroke="#3cc83c" strokeWidth="2" />
              <ellipse cx={p.ball[0]} cy={p.ball[1]} rx="19" ry="19" fill="#10ff10" fillOpacity=".12" />
              <g transform={`translate(${p.rod[0]} ${p.rod[1]})`}>
                <path d="M-11-10Q-6-17 3-15L16-3L12 8L-12 2Z" fill="#0cae0c" fillOpacity=".75" />
                <ellipse cx="2" cy="3" rx="17" ry="13" transform="rotate(40)" fill="#0ce20c" />
              </g>
              <path d={p.wire} fill="none" stroke="#0fdc0f" strokeWidth="1.200" />
            </g>
          ))}

          {/* member axes */}
          <path d="M609 478L581 484" stroke="#00e800" strokeWidth="2" />
          <path d="M573 486L582 481V488Z" fill="#009a20" />
          <path d="M609 478L620 487" stroke="#f00000" strokeWidth="2" />
          <path d="M625 492L616 489L621 484Z" fill="#a80000" />
          <path d="M609 478L610 506" stroke="#0000d0" strokeWidth="2" />
          <path d="M610 515L607 505H613Z" fill="#000090" />
          <text x="558" y="495" fill="#00d800">Y</text>
          <text x="626" y="499" fill="#e00000">X</text>
          <text x="608" y="529" fill="#0000e0">Z</text>

          {/* global axes */}
          <path d="M380 768L355 771" stroke="#00f000" strokeWidth="2" />
          <path d="M346 773L356 768V775Z" fill="#00b020" />
          <path d="M380 768L396 772" stroke="#f00000" strokeWidth="2" />
          <path d="M404 775L393 776L396 769Z" fill="#b00000" />
          <path d="M380 768V800" stroke="#0000d8" strokeWidth="2" />
          <path d="M380 809L377 798H383Z" fill="#0000a0" />
          <text x="329" y="785" fill="#00e800">Y</text>
          <text x="397" y="790" fill="#e00000">X</text>
          <text x="379" y="820" fill="#0000e8">Z</text>
        </g>
      </svg>
    </section>
  );
}

const letterCell = "border border-[#9c9c9c] border-b-[#707070] bg-[#e1e1e1] font-normal";
const headCell = "border border-[#9c9c9c] bg-[#f0f0f0] pb-px align-bottom font-normal leading-4";
const cell = "border border-[#9c9c9c] bg-white px-[3px] py-0";
const emptyColumns = ["A", "B", "C", "D", "E", "F"];

function NodeTable() {
  return (
    <div className="flex items-start border-t border-[#606060] bg-[#f0f0f0] pt-[2px] pb-[19px] pl-px">
      <table className="min-w-0 flex-1 table-fixed border-collapse font-['Liberation_Sans',sans-serif] text-[11px] leading-[14px] text-black">
        <colgroup>
          <col className="w-[46px]" />
          <col className="w-[84px]" />
          <col className="w-[72px]" />
          <col className="w-[90px]" />
          <col className="w-[78px]" />
          <col className="w-[78px]" />
          <col className="w-[78px]" />
          <col />
        </colgroup>
        <thead>
          <tr className="h-[15px]">
            <th rowSpan={3} className="border border-[#9c9c9c] bg-[#e1e1e1] p-0 leading-[14px] font-normal">
              Nudo
              <br />
              núm.
            </th>
            <th className="border border-[#9c9c9c] bg-[#0a78d7] p-0 font-normal text-white">A</th>
            {["B", "C", "D", "E", "F", "G"].map((letter) => (
              <th key={letter} className={letterCell}>
                {letter}
              </th>
            ))}
          </tr>
          <tr className="h-4">
            <th rowSpan={2} className={headCell}>Tipo de nudo</th>
            <th rowSpan={2} className={headCell}>Nudo de referencia</th>
            <th rowSpan={2} className={headCell}>Sistema de coordenadas</th>
            <th colSpan={3} className="border-x border-[#9c9c9c] bg-[#f0f0f0] font-normal">Coordenadas del nudo</th>
            <th rowSpan={2} className={headCell}>Comentario</th>
          </tr>
          <tr className="h-4">
            {["X [mm]", "Y [mm]", "Z [mm]"].map((label) => (
              <th key={label} className="border-x border-b border-[#9c9c9c] bg-[#f0f0f0] font-normal">
                {label}
              </th>
            ))}
          </tr>
        </thead>
        <tbody>
          <tr className="h-4">
            <th className={letterCell}>1</th>
            <td className={cell}>Estándar</td>
            <td className={`${cell} text-center`}>0</td>
            <td className={cell}>
              <u>C</u>artesiano
            </td>
            <td className={`${cell} text-right`}>0.0</td>
            <td className={`${cell} text-right`}>0.0</td>
            <td className={`${cell} text-right`}>0.0</td>
            <td className={cell} />
          </tr>
          {[2, 3, 4, 5, 6].map((row) => (
            <tr key={row} className="h-4">
              <th className={row === 6 ? "border border-[#9c9c9c] bg-[#0a78d7] font-normal text-white" : letterCell}>
                {row}
              </th>
              {emptyColumns.map((column) => (
                <td
                  key={column}
                  className={
                    row === 6 && column === "A"
                      ? "border border-[#9c9c9c] bg-white outline-1 -outline-offset-1 outline-black outline-dotted"
                      : cell
                  }
                />
              ))}
              <td className="border border-[#9c9c9c] bg-[#f0f0f0]" />
            </tr>
          ))}
        </tbody>
      </table>
      <div className="flex w-[17px] shrink-0 flex-col items-center self-stretch py-1">
        <Chevron d="M1 6L4.500 2L8 6" />
        <div className="mt-1 h-[17px] w-[15px] bg-[#cdcdcd]" />
        <span className="flex-1" />
        <Chevron d="M1 2L4.500 6L8 2" />
      </div>
      <span className="w-[3px]" />
    </div>
  );
}

const sheetTabs = [
  "Líneas",
  "Materiales",
  "Superficies",
  "Sólidos",
  "Huecos",
  "Apoyos en nudos",
  "Apoyos en línea",
  "Apoyos en superficie",
  "Articulaciones lineales",
  "Secciones",
  "Articulaciones en barras",
  "Excentricidades de barras",
  "Divisiones de barras",
  "Barras",
  "Apoyos elásticos en barra",
  "No linealidades de barras",
  "Conjuntos de barras",
];

function SheetTabs() {
  return (
    <div className="flex h-[36px] items-start justify-between bg-[#f0f0f0] font-['Liberation_Sans',sans-serif] text-[11px] text-black">
      <div className="flex min-w-0 flex-1 overflow-hidden border-t border-[#606060]">
        <button type="button" className="-mt-px h-[17px] border-r border-[#606060] bg-[#f0f0f0] px-[3px] whitespace-nowrap">
          Nudos
        </button>
        {sheetTabs.map((tab) => (
          <button
            type="button"
            key={tab}
            className="h-4 rounded-b-xs border-r border-b border-[#707070] bg-[#e8e8e8] px-[3px] leading-[15px] whitespace-nowrap"
          >
            {tab}
          </button>
        ))}
      </div>
      <div className="flex">
        {[
          ["Primera", "M2 1V8M7 1V8L3 4.500Z", "#aaa"],
          ["Anterior", "M6 1V8L2 4.500Z", "#aaa"],
          ["Siguiente", "M3 1V8L7 4.500Z", "#000"],
          ["Última", "M7 1V8M2 1V8L6 4.500Z", "#000"],
        ].map(([label, d, color]) => (
          <button
            type="button"
            key={label}
            aria-label={label}
            className="flex h-4 w-4 items-center justify-center border border-t-white border-r-[#808080] border-b-[#808080] border-l-white bg-[#f0f0f0]"
          >
            <svg viewBox="0 0 9 9" className="h-[9px] w-[9px]" fill={color} stroke={color}>
              <path d={d} strokeWidth=".8" />
            </svg>
          </button>
        ))}
      </div>
    </div>
  );
}

function TablePanel() {
  return (
    <section className="flex flex-col">
      <PanelTitle title="1.1 Nudos" />
      <div className="flex h-[26px] items-center bg-linear-to-b from-[#e8eef9] to-[#ccd2db] pl-2">
        <Tools items="tEditar:* tInsertar tAbajo tDiagrama:~ tOndas:~ | tIzquierda tDerecha | tSincA:* tSincB:* tRefrescar:~ | tMas:~ tEquis:~ tDos:~ | tBorrar:~ | tFilaBorrar:~ tFilaIzq tFilaDer | tAmarilla tAzul:~ | tLapiz:~ | tPropiedades gafas excel calculadora | parametros fx fxBorrar:~ | candado:~" />
      </div>
      <NodeTable />
      <SheetTabs />
    </section>
  );
}

function StatusBar() {
  return (
    <footer className="flex h-[21px] justify-end border-t border-[#8e949e] bg-linear-to-b from-[#d3d8e0] via-[#a9b0bb] to-[#b9c0ca] pt-px font-['Liberation_Sans',sans-serif] text-[11px] leading-[15px] text-[#22262c]">
      <div className="flex gap-[2px]">
        {["FORZC", "REJILLA", "CARTES", "REFENT", "GLN", "DXF"].map((label) => (
          <button
            type="button"
            key={label}
            aria-pressed={label !== "REJILLA"}
            className={
              label === "REJILLA"
                ? "border border-[#dde1e8] bg-[#bfc5ce] pb-[2px]"
                : "border border-t-black border-r-white border-b-white border-l-black bg-[#b3b9c4] px-px"
            }
          >
            {label}
          </button>
        ))}
      </div>
      <div className="flex pl-[190px]">
        <span className="w-[88px] border-l border-[#8c929c]" />
        <span className="w-[75px] border-l border-[#8c929c]" />
        <span className="w-[74px] border-l border-[#8c929c]" />
        <span className="w-[72px] border-l border-[#8c929c]" />
      </div>
    </footer>
  );
}

export default function App() {
  return (
    <div className="flex min-h-screen flex-col bg-[#d0d4dd] font-['Open_Sans','Noto_Sans',sans-serif]">
      <TitleBar />
      <MenuBar />
      <Toolbars />
      <main className="flex flex-1">
        <Navigator />
        <div className="ml-[6px] flex min-w-0 flex-1 flex-col">
          <Viewport />
          <div className="h-[7px] border-b border-[#e8ecf2] bg-[#d0d4dd]" />
          <TablePanel />
        </div>
      </main>
      <StatusBar />
    </div>
  );
}
